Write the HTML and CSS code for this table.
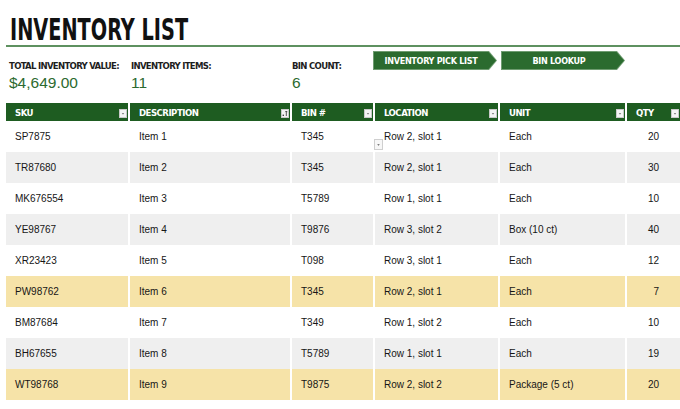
FILE: index.html
```html
<!DOCTYPE html>
<html>
<head>
<meta charset="utf-8">
<link rel="stylesheet" href="styles.css">
</head>
<body>
<div class="page">
  <header class="title-bar">
    <h1 class="title">INVENTORY LIST</h1>
  </header>
  <section class="info">
    <div class="stat stat-value">
      <div class="label">TOTAL INVENTORY VALUE:</div>
      <div class="value">$4,649.00</div>
    </div>
    <div class="stat stat-items">
      <div class="label">INVENTORY ITEMS:</div>
      <div class="value">11</div>
    </div>
    <div class="stat stat-bins">
      <div class="label">BIN COUNT:</div>
      <div class="value">6</div>
    </div>
    <div class="buttons">
      <a class="arrow-btn"><span class="arrow-inner">INVENTORY PICK LIST</span></a>
      <a class="arrow-btn"><span class="arrow-inner">BIN LOOKUP</span></a>
    </div>
  </section>

  <div class="table-wrap">
    <div class="grid">
      <div class="row head">
        <div class="cell">SKU<span class="filter"><svg width="8" height="9" viewBox="0 0 8 9"><rect x="0.5" y="0.5" width="7" height="8" fill="#f4f4f4" stroke="#c9c9c9"/><path d="M2.8 4.2h2.4L4 5.6z" fill="#555"/></svg></span></div>
        <div class="cell">DESCRIPTION<span class="filter"><svg width="8" height="9" viewBox="0 0 8 9"><rect x="0.5" y="0.5" width="7" height="8" fill="#f4f4f4" stroke="#c9c9c9"/><rect x="1.6" y="5.6" width="1.4" height="1.4" fill="#444"/><path d="M5.3 2v5M4.3 3.1l1-1.1 1 1.1" stroke="#444" stroke-width="0.9" fill="none"/></svg></span></div>
        <div class="cell">BIN #<span class="filter"><svg width="8" height="9" viewBox="0 0 8 9"><rect x="0.5" y="0.5" width="7" height="8" fill="#f4f4f4" stroke="#c9c9c9"/><path d="M2.8 4.2h2.4L4 5.6z" fill="#555"/></svg></span></div>
        <div class="cell">LOCATION<span class="filter"><svg width="8" height="9" viewBox="0 0 8 9"><rect x="0.5" y="0.5" width="7" height="8" fill="#f4f4f4" stroke="#c9c9c9"/><path d="M2.8 4.2h2.4L4 5.6z" fill="#555"/></svg></span></div>
        <div class="cell">UNIT<span class="filter"><svg width="8" height="9" viewBox="0 0 8 9"><rect x="0.5" y="0.5" width="7" height="8" fill="#f4f4f4" stroke="#c9c9c9"/><path d="M2.8 4.2h2.4L4 5.6z" fill="#555"/></svg></span></div>
        <div class="cell">QTY<span class="filter"><svg width="8" height="9" viewBox="0 0 8 9"><rect x="0.5" y="0.5" width="7" height="8" fill="#f4f4f4" stroke="#c9c9c9"/><path d="M2.8 4.2h2.4L4 5.6z" fill="#555"/></svg></span></div>
      </div>

      <div class="row"><div class="cell">SP7875</div><div class="cell">Item 1</div><div class="cell">T345</div><div class="cell">Row 2, slot 1</div><div class="cell">Each</div><div class="cell num">20</div></div>
      <div class="row alt"><div class="cell">TR87680</div><div class="cell">Item 2</div><div class="cell">T345</div><div class="cell">Row 2, slot 1</div><div class="cell">Each</div><div class="cell num">30</div></div>
      <div class="row"><div class="cell">MK676554</div><div class="cell">Item 3</div><div class="cell">T5789</div><div class="cell">Row 1, slot 1</div><div class="cell">Each</div><div class="cell num">10</div></div>
      <div class="row alt"><div class="cell">YE98767</div><div class="cell">Item 4</div><div class="cell">T9876</div><div class="cell">Row 3, slot 2</div><div class="cell">Box (10 ct)</div><div class="cell num">40</div></div>
      <div class="row"><div class="cell">XR23423</div><div class="cell">Item 5</div><div class="cell">T098</div><div class="cell">Row 3, slot 1</div><div class="cell">Each</div><div class="cell num">12</div></div>
      <div class="row low"><div class="cell">PW98762</div><div class="cell">Item 6</div><div class="cell">T345</div><div class="cell">Row 2, slot 1</div><div class="cell">Each</div><div class="cell num">7</div></div>
      <div class="row"><div class="cell">BM87684</div><div class="cell">Item 7</div><div class="cell">T349</div><div class="cell">Row 1, slot 2</div><div class="cell">Each</div><div class="cell num">10</div></div>
      <div class="row alt"><div class="cell">BH67655</div><div class="cell">Item 8</div><div class="cell">T5789</div><div class="cell">Row 1, slot 1</div><div class="cell">Each</div><div class="cell num">19</div></div>
      <div class="row low"><div class="cell">WT98768</div><div class="cell">Item 9</div><div class="cell">T9875</div><div class="cell">Row 2, slot 2</div><div class="cell">Package (5 ct)</div><div class="cell num">20</div></div>
    </div>
    <span class="cell-dropdown"><svg width="9" height="11" viewBox="0 0 9 11"><rect x="0.5" y="0.5" width="8" height="10" fill="#f7f7f7" stroke="#cfcfcf"/><path d="M3.2 5.2h2.6L4.5 6.7z" fill="#555"/></svg></span>
  </div>
</div>
</body>
</html>
```

FILE: styles.css
```css
* { box-sizing: border-box; }

html, body {
  margin: 0;
  padding: 0;
  background: #ffffff;
  overflow: hidden;
}

body {
  width: 680px;
  height: 409px;
  font-family: "Liberation Sans", Arial, sans-serif;
  color: #161616;
}

.page {
  padding-left: 6px;
}

.title-bar {
  border-bottom: 2px solid #5e9160;
  padding: 15px 0 1px 4px;
}

.title {
  display: inline-block;
  margin: 0;
  font-family: "Liberation Sans Narrow", "DejaVu Sans Condensed", "Liberation Sans", sans-serif;
  font-stretch: condensed;
  font-weight: bold;
  font-size: 30px;
  line-height: 29px;
  color: #111;
  transform: scaleX(0.715);
  transform-origin: left center;
}

.info {
  display: flex;
  align-items: flex-start;
  height: 56px;
  padding-top: 4px;
}

.stat {
  padding-top: 9px;
  padding-left: 3px;
}
.stat-value { width: 122px; }
.stat-items { width: 161px; }
.stat-bins { width: 84px; }

.label {
  font-family: "Liberation Sans Narrow", "DejaVu Sans Condensed", "Liberation Sans", sans-serif;
  font-stretch: condensed;
  font-weight: bold;
  font-size: 9.5px;
  line-height: 11px;
  letter-spacing: -0.7px;
  color: #1e1e1e;
  white-space: nowrap;
}

.value {
  margin-top: 3px;
  font-size: 15.5px;
  line-height: 18px;
  color: #2c6a2f;
}

.buttons {
  display: flex;
  gap: 4px;
}

.arrow-btn {
  display: flex;
  width: 124px;
  height: 19px;
  background: #6f9c71;
  clip-path: polygon(0 0, calc(100% - 8px) 0, 100% 50%, calc(100% - 8px) 100%, 0 100%);
  padding: 1px;
}

.arrow-inner {
  flex: 1;
  display: flex;
  align-items: center;
  justify-content: center;
  padding-right: 8px;
  background: #2b6b2f;
  clip-path: polygon(0 0, calc(100% - 7.5px) 0, 100% 50%, calc(100% - 7.5px) 100%, 0 100%);
  color: #ffffff;
  font-family: "Liberation Sans Narrow", "DejaVu Sans Condensed", "Liberation Sans", sans-serif;
  font-stretch: condensed;
  font-weight: bold;
  font-size: 9px;
  letter-spacing: -0.3px;
  white-space: nowrap;
}

.table-wrap {
  position: relative;
}

.grid {
  display: grid;
  grid-template-columns: 122px 160px 81px 123px 125px 1fr;
  column-gap: 2px;
}

.row { display: contents; }

.cell {
  height: 31px;
  display: flex;
  align-items: center;
  padding-left: 9px;
  font-size: 10px;
  white-space: nowrap;
  background: #ffffff;
}

.row.alt .cell { background: #efefef; }
.row.low .cell { background: #f6e3a8; }

.cell.num {
  justify-content: flex-end;
  padding-right: 21px;
}

.row.head .cell {
  height: 18px;
  background: #1e5c21;
  color: #ffffff;
  font-family: "Liberation Sans Narrow", "DejaVu Sans Condensed", "Liberation Sans", sans-serif;
  font-stretch: condensed;
  font-weight: bold;
  font-size: 9.5px;
  letter-spacing: -0.5px;
  justify-content: space-between;
  padding-right: 1px;
}

.filter {
  display: flex;
  margin-top: 3px;
}

.cell-dropdown {
  position: absolute;
  left: 368px;
  top: 36px;
  display: flex;
}
```
